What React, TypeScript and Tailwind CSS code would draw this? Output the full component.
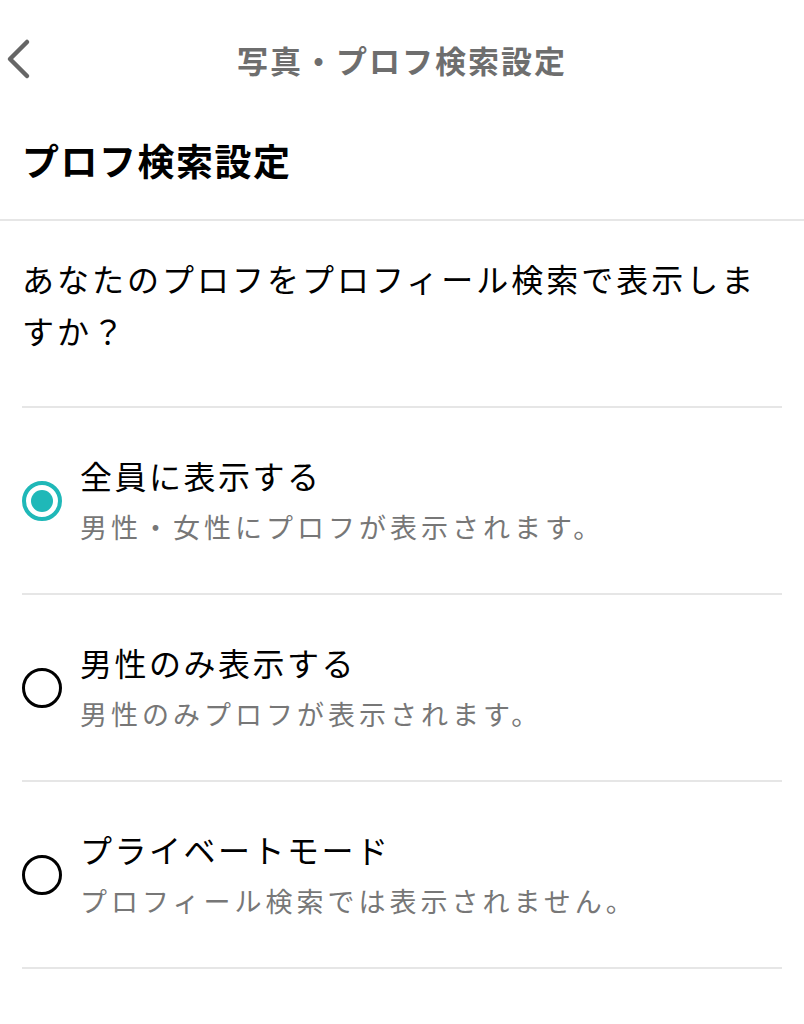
import React, { useState } from 'react';

const options = [
  { id: 'all', title: '全員に表示する', desc: '男性・女性にプロフが表示されます。' },
  { id: 'male', title: '男性のみ表示する', desc: '男性のみプロフが表示されます。' },
  { id: 'private', title: 'プライベートモード', desc: 'プロフィール検索では表示されません。' },
];

function Radio({ checked }: { checked: boolean }) {
  return checked ? (
    <div className="w-[40px] h-[40px] rounded-full border-[4px] border-[#1fb8b8] flex items-center justify-center shrink-0">
      <div className="w-[22px] h-[22px] rounded-full bg-[#1fb8b8]" />
    </div>
  ) : (
    <div className="w-[40px] h-[40px] rounded-full border-[3.5px] border-black shrink-0" />
  );
}

export default function App() {
  const [selected, setSelected] = useState('all');

  return (
    <div className="min-h-screen bg-white text-black font-['Noto_Sans_CJK_JP','Noto_Sans',sans-serif]">
      <header className="relative h-[120px] flex items-center justify-center">
        <button className="absolute left-[5px] top-[38px] p-0" aria-label="戻る">
          <svg width="28" height="42" viewBox="0 0 28 42" fill="none">
            <path d="M22 4 L5 21 L22 38" stroke="#666666" strokeWidth="4.5" strokeLinecap="round" strokeLinejoin="round" />
          </svg>
        </button>
        <h1 className="text-[31px] leading-[40px] font-bold text-[#6e6e6e] tracking-[2px]">写真・プロフ検索設定</h1>
      </header>

      <div className="px-[22px] pt-[15px] pb-[34px]">
        <h2 className="text-[37px] leading-[50px] font-bold tracking-[1.5px]">プロフ検索設定</h2>
      </div>

      <div className="h-[2px] bg-[#e6e6e6]" />

      <div className="px-[22px]">
        <p className="pt-[31px] pb-[50px] text-[32px] leading-[52px] tracking-[3px]">
          あなたのプロフをプロフィール検索で表示しますか？
        </p>
        <div className="h-[2px] bg-[#e6e6e6]" />

        {options.map((o) => (
          <div key={o.id}>
            <button
              onClick={() => setSelected(o.id)}
              className="w-full flex items-center gap-[18px] pt-[45px] pb-[44px] text-left"
            >
              <Radio checked={selected === o.id} />
              <div className="flex flex-col">
                <span className="text-[32px] leading-[44px] tracking-[2.5px] text-black">{o.title}</span>
                <span className="mt-[8px] text-[27px] leading-[44px] tracking-[4px] text-[#777777]">{o.desc}</span>
              </div>
            </button>
            <div className="h-[2px] bg-[#e6e6e6]" />
          </div>
        ))}
      </div>
    </div>
  );
}
